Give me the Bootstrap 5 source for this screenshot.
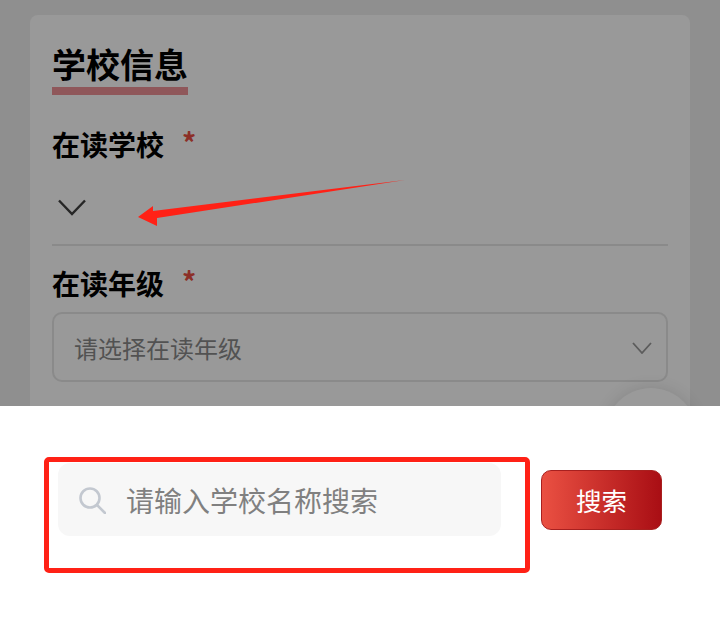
<!DOCTYPE html>
<html lang="zh-CN">
<head>
<meta charset="utf-8">
<title>学校信息</title>
<link href="https://cdn.jsdelivr.net/npm/bootstrap@5.3.0/dist/css/bootstrap.min.css" rel="stylesheet">
<style>
html,body{height:630px;overflow:hidden;margin:0;background:#fff;font-family:"Noto Sans CJK SC","Liberation Sans",sans-serif}
.screen{width:720px;height:630px;position:relative;overflow:hidden}
.dimmed{height:406px;background:#8f8f8f;padding:15px 30px 0;overflow:hidden;position:relative}
.panel{background:#999;border-radius:8px 8px 0 0;height:500px;padding:25px 22px 0}
.sect-title{display:inline-block;font-size:34px;font-weight:700;line-height:47px;color:#000;border-bottom:8px solid #8f575a;margin:0;padding:0}
.field-label{font-size:28px;font-weight:700;line-height:40px;color:#000;display:flex}
.req{color:#8c2f27;font-size:28px;line-height:30px;margin:3px 0 0 18px;font-weight:700}
.label-a{margin-top:29px}
.chev-row{height:82px;border-bottom:2px solid #8a8a8a;padding:29px 0 0 6px}
.label-b{margin-top:17px}
.fake-select{height:70px;margin-top:9px;border:2px solid #8a8a8a;border-radius:10px;padding:2px 14px 0 20px;font-size:24px;color:#525252}
.fab{position:absolute;left:605px;top:388px;width:92px;height:92px;border-radius:50%;background:#9a9a9a;box-shadow:0 0 16px rgba(0,0,0,.12)}
.sheet{height:224px;background:#fff;padding:57px 58px 0;align-items:flex-start}
.search-box{width:443px;height:73px;background:#f7f7f7;border-radius:12px;padding-left:20px;font-size:28px;color:#808080;gap:20px}
.go-btn{width:121px;height:60px;margin:7px 0 0 40px;padding:0;border:1px solid #a8201f;border-radius:10px;background:linear-gradient(90deg,#ea5042,#a90e14);color:#fff;font-size:25.5px}
.go-btn:hover{color:#fff}
.mark-rect{position:absolute;left:44px;top:457px;width:486px;height:116px;border:5px solid #ff2116;border-radius:5px;pointer-events:none}
.mark-arrow{position:absolute;left:130px;top:170px;pointer-events:none}
</style>
</head>
<body>
<div class="screen">
  <div class="dimmed">
    <div class="panel">
      <h2 class="sect-title">学校信息</h2>
      <div class="field-label label-a">在读学校<span class="req">*</span></div>
      <div class="chev-row">
        <svg width="28" height="18" viewBox="0 0 28 18" fill="none" stroke="#262626" stroke-width="2.4"><path d="M1 1.5 14 15 27 1.5"/></svg>
      </div>
      <div class="field-label label-b">在读年级<span class="req">*</span></div>
      <div class="fake-select d-flex align-items-center justify-content-between">
        <span>请选择在读年级</span>
        <svg width="20" height="12" viewBox="0 0 20 12" fill="none" stroke="#5c5c5c" stroke-width="1.8"><path d="M1 1 10 11 19 1"/></svg>
      </div>
    </div>
  </div>
  <div class="fab"></div>
  <div class="sheet d-flex position-relative">
    <div class="search-box d-flex align-items-center">
      <svg width="28" height="28" viewBox="0 0 28 28" fill="none" stroke="#c3c8d0" stroke-width="2.6"><circle cx="12" cy="12" r="9.5"/><path d="M19 19 27 27" stroke-linecap="round"/></svg>
      <span>请输入学校名称搜索</span>
    </div>
    <button type="button" class="btn go-btn">搜索</button>
  </div>
  <div class="mark-rect"></div>
  <svg class="mark-arrow" width="280" height="60" viewBox="0 0 280 60"><path d="M8 47 23 36 23 41 275 10 27 48 27 56Z" fill="#ff2116"/></svg>
</div>
<script src="https://cdn.jsdelivr.net/npm/bootstrap@5.3.0/dist/js/bootstrap.bundle.min.js"></script>
</body>
</html>
